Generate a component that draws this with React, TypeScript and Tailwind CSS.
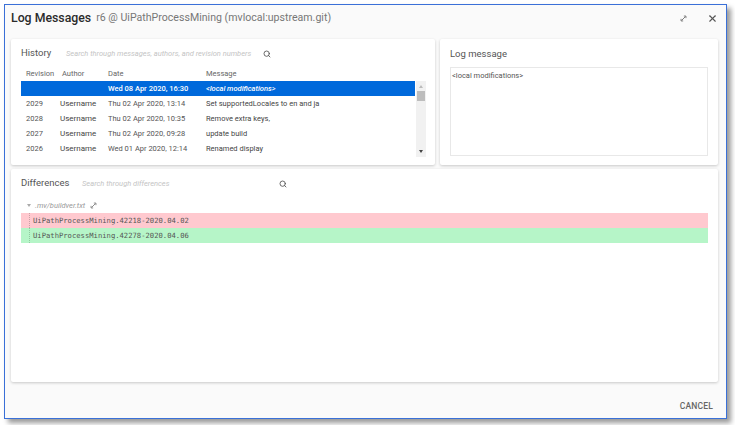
import { Search, X } from 'lucide-react';

const ROWS = [
  { rev: '2029', date: 'Thu 02 Apr 2020, 13:14', msg: 'Set supportedLocales to en and ja' },
  { rev: '2028', date: 'Thu 02 Apr 2020, 10:35', msg: 'Remove extra keys,' },
  { rev: '2027', date: 'Thu 02 Apr 2020, 09:28', msg: 'update build' },
  { rev: '2026', date: 'Wed 01 Apr 2020, 12:14', msg: 'Renamed display' },
];

const GRID = 'grid grid-cols-[34px_48px_98px_1fr] pl-[5px] items-center';

function ExpandIcon({ className }: { className?: string }) {
  return (
    <svg viewBox="0 0 10 10" className={className} fill="none" stroke="currentColor" strokeWidth="1.2">
      <path d="M2.5 7.5 L7.5 2.5" />
      <path d="M5.5 1.5 H8.5 V4.5" />
      <path d="M1.5 5.5 V8.5 H4.5" />
    </svg>
  );
}

export default function App() {
  return (
    <div className="w-[735px] h-[425px] bg-white pl-[4px] pt-[4px] overflow-hidden font-['Roboto',sans-serif]">
      <div className="w-[723px] h-[415px] border border-[#3a70d8] bg-[#fafafa] shadow-[4px_4px_5px_rgba(0,0,0,0.4)] flex flex-col pl-[6px] pr-[8px]">
        {/* Header */}
        <div className="h-[34px] shrink-0 flex items-center pb-[8px]">
          <span className="text-[12.3px] font-medium text-[#2b2b2b] leading-none">Log Messages</span>
          <span className="ml-[5px] text-[10.6px] text-[#777] leading-none">r6 @ UiPathProcessMining (mvlocal:upstream.git)</span>
          <div className="ml-auto flex items-center gap-[20px]">
            <ExpandIcon className="w-[7px] h-[7px] text-[#666]" />
            <X className="w-[11px] h-[11px] text-[#555]" strokeWidth={2.4} />
          </div>
        </div>

        {/* Top panels */}
        <div className="flex gap-[5px] h-[126px] shrink-0">
          <section className="w-[424px] bg-white rounded-[2px] shadow-[0_1px_3px_rgba(0,0,0,0.2)] pl-[10px] pt-[8px]">
            <div className="flex items-center h-[13px]">
              <span className="text-[9.5px] text-[#555] w-[45px]">History</span>
              <span className="text-[7.5px] italic text-[#c4c4c4] w-[197px] whitespace-nowrap">Search through messages, authors, and revision numbers</span>
              <Search className="w-[8px] h-[8px] text-[#555]" strokeWidth={2.6} />
            </div>
            <div className={`${GRID} h-[15px] mt-[6px] w-[395px] text-[7.5px] text-[#666]`}>
              <span>Revision</span>
              <span className="pl-[2px]">Author</span>
              <span>Date</span>
              <span>Message</span>
            </div>
            <div className="flex">
              <div className="w-[394px]">
                <div className={`${GRID} h-[15px] bg-[#0069db] text-white text-[7.5px] font-medium`}>
                  <span />
                  <span />
                  <span>Wed 08 Apr 2020, 16:30</span>
                  <span className="italic">&lt;local modifications&gt;</span>
                </div>
                {ROWS.map((row) => (
                  <div key={row.rev} className={`${GRID} h-[15px] text-[7.5px] text-[#555]`}>
                    <span>{row.rev}</span>
                    <span className="text-[8px] text-[#444]">Username</span>
                    <span>{row.date}</span>
                    <span className="text-[#444]">{row.msg}</span>
                  </div>
                ))}
              </div>
              <div className="w-[10px] ml-[1px] h-[76px] bg-[#f1f1f1] flex flex-col items-center pt-[4px]">
                <div className="w-0 h-0 border-x-[2.5px] border-x-transparent border-b-[3px] border-b-[#bbb]" />
                <div className="w-[8px] h-[10px] mt-[3px] bg-[#bdbdbd]" />
                <div className="mt-auto mb-[4px] w-0 h-0 border-x-[2.5px] border-x-transparent border-t-[3px] border-t-[#444]" />
              </div>
            </div>
          </section>

          <section className="flex-1 bg-white rounded-[2px] shadow-[0_1px_3px_rgba(0,0,0,0.2)] px-[10px] pt-[8px] flex flex-col">
            <div className="h-[13px] text-[9.5px] text-[#555] leading-[13px]">Log message</div>
            <div className="mt-[7px] h-[89px] border border-[#e8e8e8] px-[1px] pt-[2px] text-[7.5px] text-[#555]">&lt;local modifications&gt;</div>
          </section>
        </div>

        {/* Differences */}
        <section className="mt-[4px] h-[213px] shrink-0 bg-white rounded-[2px] shadow-[0_1px_3px_rgba(0,0,0,0.2)] pl-[10px] pr-[10px] pt-[8px]">
          <div className="flex items-center h-[13px]">
            <span className="text-[9.5px] text-[#555] w-[61px]">Differences</span>
            <span className="text-[7.5px] italic text-[#c4c4c4] w-[197px] whitespace-nowrap">Search through differences</span>
            <Search className="w-[8px] h-[8px] text-[#555]" strokeWidth={2.6} />
          </div>
          <div className="flex items-center h-[15px] mt-[8px] pl-[6px] text-[7.5px] italic text-[#999]">
            <div className="w-0 h-0 border-x-[2.5px] border-x-transparent border-t-[3px] border-t-[#aaa] mr-[4px]" />
            <span>.mv/buildver.txt</span>
            <ExpandIcon className="w-[7px] h-[7px] ml-[5px] text-[#777]" />
          </div>
          <div className="font-['DejaVu_Sans_Mono',monospace] text-[7.2px] text-[#555]">
            <div className="h-[15px] bg-[#ffc9cf] flex pl-[8px]">
              <span className="border-l border-dotted border-[#c9a0a5] pl-[3px] leading-[15px]">UiPathProcessMining.42218-2020.04.02</span>
            </div>
            <div className="h-[15px] bg-[#b6f5c8] flex pl-[8px]">
              <span className="border-l border-dotted border-[#8fc9a0] pl-[3px] leading-[15px]">UiPathProcessMining.42278-2020.04.06</span>
            </div>
          </div>
        </section>

        {/* Footer */}
        <div className="flex-1 flex items-center justify-end pr-[5px] pt-[13px]">
          <span className="text-[8.5px] font-medium tracking-[0.2px] text-[#666]">CANCEL</span>
        </div>
      </div>
    </div>
  );
}
